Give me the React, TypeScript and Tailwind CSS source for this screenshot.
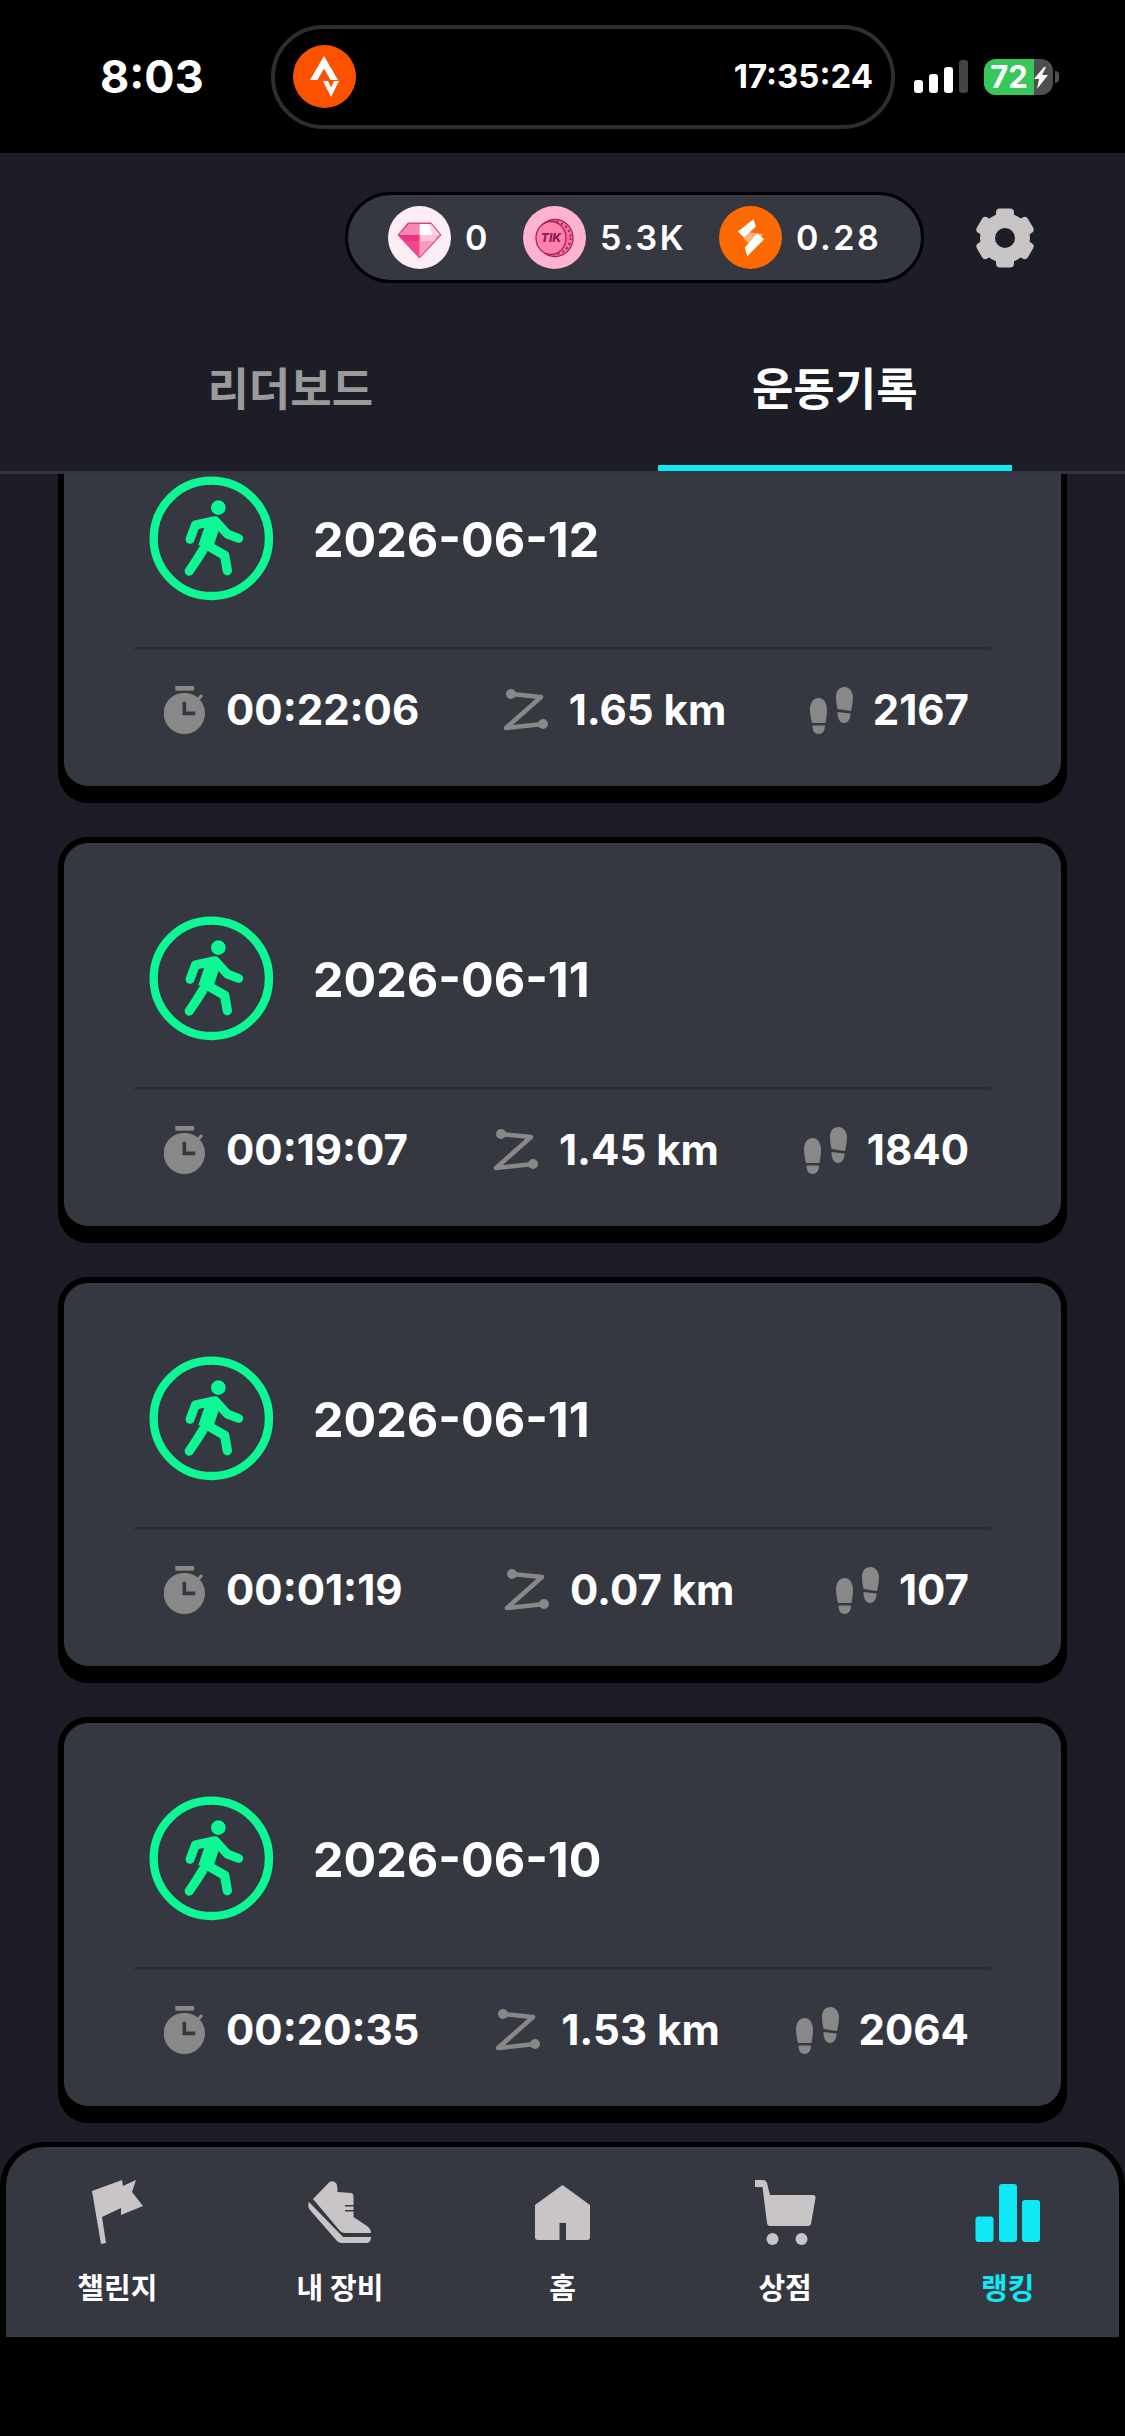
const workouts = [
  { date: '2026-06-12', time: '00:22:06', distance: '1.65 km', steps: '2167' },
  { date: '2026-06-11', time: '00:19:07', distance: '1.45 km', steps: '1840' },
  { date: '2026-06-11', time: '00:01:19', distance: '0.07 km', steps: '107' },
  { date: '2026-06-10', time: '00:20:35', distance: '1.53 km', steps: '2064' },
];

function StravaIcon() {
  return (
    <svg width="63" height="63" viewBox="0 0 63 63">
      <circle cx="31.5" cy="31.5" r="31.5" fill="#fc5200" />
      <path d="M31 11 L17 35 H24.5 L31 23.5 L37.5 35 H45 Z" fill="#fff" />
      <path d="M30 36 L38 52 L46 36 H41 L38 42.5 L35 36 Z" fill="#fff" />
    </svg>
  );
}

function Gem() {
  return (
    <svg width="63" height="63" viewBox="0 0 63 63">
      <circle cx="31.5" cy="31.5" r="31.5" fill="#fdeef6" />
      <path d="M20 17 H43 L53 29 L31.5 52 L10 29 Z" fill="#f0488c" stroke="#d93a7c" strokeWidth="1" />
      <path d="M31.5 18 H43 L52 29 H31.5 Z" fill="#ffd7e6" />
      <path d="M31.5 18 H41 L44 29 H31.5 Z" fill="#ffffff" />
      <path d="M21 18 H31.5 V29 H11 Z" fill="#f986b3" />
      <path d="M31.5 29 H52 L31.5 51 Z" fill="#fb9abf" />
      <path d="M31.5 35 H46.5 L49 29 H31.5 Z" fill="#ffc3d9" />
      <path d="M11 29 H31.5 V35 H16.5 Z" fill="#e9357f" />
    </svg>
  );
}

function TikCoin() {
  return (
    <svg width="63" height="63" viewBox="0 0 63 63">
      <circle cx="31.5" cy="31.5" r="31.5" fill="#ffb3d0" />
      <ellipse cx="32" cy="32" rx="18" ry="18.5" fill="#f7709f" stroke="#a3235f" strokeWidth="1.3" />
      <ellipse cx="32" cy="32" rx="15.5" ry="16" fill="none" stroke="#a3235f" strokeWidth="2" strokeDasharray="2 3" />
      <ellipse cx="28" cy="32" rx="15" ry="16.5" fill="#ff82ae" stroke="#a3235f" strokeWidth="1.3" />
      <text x="28" y="36" textAnchor="middle" fontSize="12" fontWeight="800" fontStyle="italic" fill="#8f1c52" fontFamily="Inter, sans-serif">TIK</text>
    </svg>
  );
}

function SweatCoin() {
  return (
    <svg width="63" height="63" viewBox="27 30 190 190">
      <circle cx="122" cy="125" r="95" fill="#ff6a00" />
      <path d="M100 128 L122 110 L160 115 L140 136 L118 143 Z" fill="#ffb080" />
      <path d="M131 70 L138 92 L103 126 L84 107 Z" fill="#fff" />
      <path d="M143 112 L163 130 L112 182 L105 155 Z" fill="#fff" />
    </svg>
  );
}

function GearIcon() {
  return (
    <svg width="58" height="60" viewBox="-29 -30 58 60" fill="#c9c5c6">
      <circle r="25" />
      {[0, 60, 120, 180, 240, 300].map((deg) => (
        <rect key={deg} x="-9" y="-29.5" width="18" height="12" rx="4" transform={`rotate(${deg})`} />
      ))}
      <circle r="10" fill="#1c1d26" />
    </svg>
  );
}

function WalkerBadge() {
  return (
    <svg width="125" height="125" viewBox="27 18 375 375" fill="none" stroke="#0ef795" strokeLinecap="round" strokeLinejoin="round">
      <circle cx="214" cy="205" r="173" strokeWidth="25" />
      <circle cx="235" cy="113" r="22" fill="#0ef795" stroke="none" />
      <path d="M150 208 L166 165 L225 152 L262 192 L296 205" strokeWidth="27" />
      <path d="M222 155 L196 232" strokeWidth="44" strokeLinecap="butt" />
      <path d="M190 238 L170 270 L148 303" strokeWidth="28" />
      <path d="M205 228 L254 256 L262 302" strokeWidth="28" />
    </svg>
  );
}

function TimerIcon() {
  return (
    <svg width="42" height="48" viewBox="44 44 126 144" className="shrink-0">
      <rect x="78" y="44" width="56" height="14" fill="#888888" />
      <circle cx="105" cy="126" r="62" fill="#888888" />
      <path d="M145 86 L158 71" stroke="#888888" strokeWidth="10" />
      <path d="M105 91 V126 H138" stroke="#363841" strokeWidth="11" fill="none" />
    </svg>
  );
}

function RouteIcon() {
  return (
    <svg width="46" height="42" viewBox="0 0 46 42" className="shrink-0">
      <path d="M8 5 L38 8 L3 39 L40 35" stroke="#888888" strokeWidth="4.5" fill="none" strokeLinejoin="round" />
      <circle cx="8" cy="5" r="5" fill="#888888" />
      <circle cx="40" cy="35" r="5" fill="#888888" />
    </svg>
  );
}

function StepsIcon() {
  return (
    <svg width="43" height="47" viewBox="0 0 43 47" className="shrink-0" fill="#888888">
      <path d="M8.5 11 C14 11 17 16 17 23 C17 28 16 33 15.5 36 H2 C1.5 33 0 28 0 23 C0 16 3 11 8.5 11 Z" />
      <path d="M2.5 38.5 H15 C15 43 13 47 8.5 47 C4 47 2.5 43 2.5 38.5 Z" />
      <path d="M34.5 0 C40 0 43 5 43 11 C43 16 41.5 21 41 24 L27.5 22 C27 18 26 15 26 10 C26 4 29 0 34.5 0 Z" />
      <path d="M27.5 25 L40.5 26.5 C40.5 32 38 36 34 36 C29.5 36 27.5 31 27.5 25 Z" />
    </svg>
  );
}

function Stat({ icon, value }: { icon: React.ReactNode; value: string }) {
  return (
    <div className="flex items-center gap-[20px]">
      {icon}
      <span className="text-[42px] leading-[48px] font-bold text-white">{value}</span>
    </div>
  );
}

function WorkoutCard({ date, time, distance, steps }: (typeof workouts)[number]) {
  return (
    <div className="rounded-[30px] border-[6px] border-black bg-[#363841] px-[70px] pt-[73px] pb-[52px] shadow-[0_11px_0_0_#000]">
      <div className="flex items-center gap-[39px] pl-[15px]">
        <WalkerBadge />
        <span className="pt-[3px] text-[48.5px] leading-[56px] font-bold text-white">{date}</span>
      </div>
      <div className="mt-[46px] h-[3px] bg-[#2c2d36]" />
      <div className="mt-[36px] flex items-center justify-between pl-[30px] pr-[22px]">
        <Stat icon={<TimerIcon />} value={time} />
        <Stat icon={<RouteIcon />} value={distance} />
        <Stat icon={<StepsIcon />} value={steps} />
      </div>
    </div>
  );
}

function Balance({ icon, value }: { icon: React.ReactNode; value: string }) {
  return (
    <div className="flex items-center gap-[14px]">
      {icon}
      <span className="text-[34px] leading-[40px] font-semibold tracking-[2.5px] text-white">{value}</span>
    </div>
  );
}

const navItems = [
  {
    label: '챌린지',
    icon: (
      <svg width="51" height="65" viewBox="0 0 51 65" fill="#c9c5c6">
        <path d="M0 11 L30 0 L31 6 L44 0 L40 12 L51 26 L29 35 L29 28 L10 37 L14 63 L9 64 Z" />
      </svg>
    ),
  },
  {
    label: '내 장비',
    icon: (
      <svg width="63" height="63" viewBox="0 0 63 63" fill="#c9c5c6">
        <path d="M5 18 L21 1.5 Q25 -1 28 2 Q29.5 4 29.5 11 L43 12 Q45.5 12.5 45.5 15 V24 H37 V25.5 H45.5 V29 H37 V30.5 H45.5 V36 L59 45 Q63 48 63 52 H37 Q34 52 32 50 Z" />
        <path d="M1 21 L35 56 H63 Q63 62 58 62 H34 Q31 62 29 60 L2 29 Q-1 25 1 21 Z" />
      </svg>
    ),
  },
  {
    label: '홈',
    icon: (
      <svg width="55" height="55" viewBox="0 0 55 55" fill="#c9c5c6">
        <path d="M27.5 0 L55 20 V52 Q55 55 52 55 H31 V38 H24.5 V55 H3 Q0 55 0 52 V20 Z" />
      </svg>
    ),
  },
  {
    label: '상점',
    icon: (
      <svg width="61" height="65" viewBox="0 0 61 65" fill="#c9c5c6">
        <path d="M0 0 H8 Q11 0 12 3 L15 15 H58 Q61 15 60.5 18 L56 44 Q55.5 46 53 46 H15 Q12.5 46 12 43 L7.5 7 H0 Z" />
        <circle cx="17.5" cy="59" r="6" />
        <circle cx="46.5" cy="59" r="6" />
      </svg>
    ),
  },
  {
    label: '랭킹',
    active: true,
    icon: (
      <svg width="65" height="58" viewBox="0 0 65 58" fill="#0ee9f5">
        <rect x="0.5" y="32.5" width="18" height="25.5" rx="3" />
        <rect x="24" y="0" width="18" height="58" rx="3" />
        <rect x="47" y="16" width="18" height="42" rx="3" />
      </svg>
    ),
  },
];

export default function App() {
  return (
    <div className="flex h-[2436px] w-[1125px] flex-col overflow-hidden bg-black font-[Inter,'Noto_Sans_CJK_KR',sans-serif]">
      {/* status bar */}
      <div className="flex h-[153px] shrink-0 items-center pl-[100px]">
        <span className="w-[171px] text-[45px] leading-none font-bold text-white">8:03</span>
        <div className="flex h-[104px] w-[624px] items-center justify-between rounded-full border-[4px] border-[#2e2e2e] pl-[18px] pr-[18px]">
          <StravaIcon />
          <span className="text-[33px] leading-none font-bold text-white">17:35:24</span>
        </div>
        <div className="ml-[19px] flex h-[33px] items-end gap-[6px]">
          <div className="h-[13px] w-[9px] rounded-[3px] bg-white" />
          <div className="h-[19px] w-[9px] rounded-[3px] bg-white" />
          <div className="h-[26px] w-[9px] rounded-[3px] bg-white" />
          <div className="h-[33px] w-[9px] rounded-[3px] bg-[#444]" />
        </div>
        <div className="relative ml-[16px]">
          <div className="flex h-[36px] w-[69px] overflow-hidden rounded-[12px] bg-[#4f4f4f]">
            <div className="flex w-[50px] shrink-0 items-center justify-center bg-[#37c85c] text-[31px] leading-none font-bold text-white">72</div>
            <svg width="17" height="36" viewBox="0 0 17 36">
              <path d="M10 8 L0 20 H5 L3 30 L14 16 H8 L12 8 Z" fill="#fff" />
            </svg>
          </div>
          <div className="absolute top-[12px] -right-[6px] h-[12px] w-[4px] rounded-r-full bg-[#4f4f4f]" />
        </div>
      </div>

      <div className="flex min-h-0 flex-1 flex-col bg-[#1c1d26]">
        {/* balances */}
        <div className="flex shrink-0 items-center justify-end gap-[52px] pt-[39px] pr-[91px]">
          <div className="flex h-[91px] w-[579px] items-center gap-[33px] rounded-full border-[3px] border-black bg-[#363841] pl-[40px]">
            <Balance icon={<Gem />} value="0" />
            <Balance icon={<TikCoin />} value="5.3K" />
            <Balance icon={<SweatCoin />} value="0.28" />
          </div>
          <GearIcon />
        </div>

        {/* tabs */}
        <div className="grid h-[191px] shrink-0 grid-cols-2 border-b-[3px] border-[#33343d] px-[18px]">
          <button className="flex flex-col items-center justify-end">
            <span className="mb-[47px] text-[45px] leading-[56px] font-bold text-[#9a9a9a]">리더보드</span>
            <div className="h-[6px] w-[354px]" />
          </button>
          <button className="flex flex-col items-center justify-end">
            <span className="mb-[47px] text-[45px] leading-[56px] font-bold text-white">운동기록</span>
            <div className="h-[6px] w-[354px] bg-[#0ee9f5]" />
          </button>
        </div>

        {/* workout list, scrolled a little */}
        <div className="min-h-0 flex-1 overflow-hidden">
          <div className="-mt-[77px] flex flex-col gap-[45px] px-[58px]">
            {workouts.map((w, i) => (
              <WorkoutCard key={i} {...w} />
            ))}
          </div>
        </div>

        {/* bottom nav */}
        <div className="grid h-[195px] shrink-0 grid-cols-5 rounded-t-[44px] border-x-[6px] border-t-[5px] border-black bg-[#363841] pt-[33px]">
          {navItems.map((item) => (
            <div key={item.label} className="flex flex-col items-center">
              <div className="flex h-[65px] items-center justify-center">{item.icon}</div>
              <span className={`mt-[26px] text-[29px] leading-[36px] font-bold ${item.active ? 'text-[#0ee9f5]' : 'text-white'}`}>
                {item.label}
              </span>
            </div>
          ))}
        </div>
      </div>
      <div className="h-[99px] shrink-0" />
    </div>
  );
}
